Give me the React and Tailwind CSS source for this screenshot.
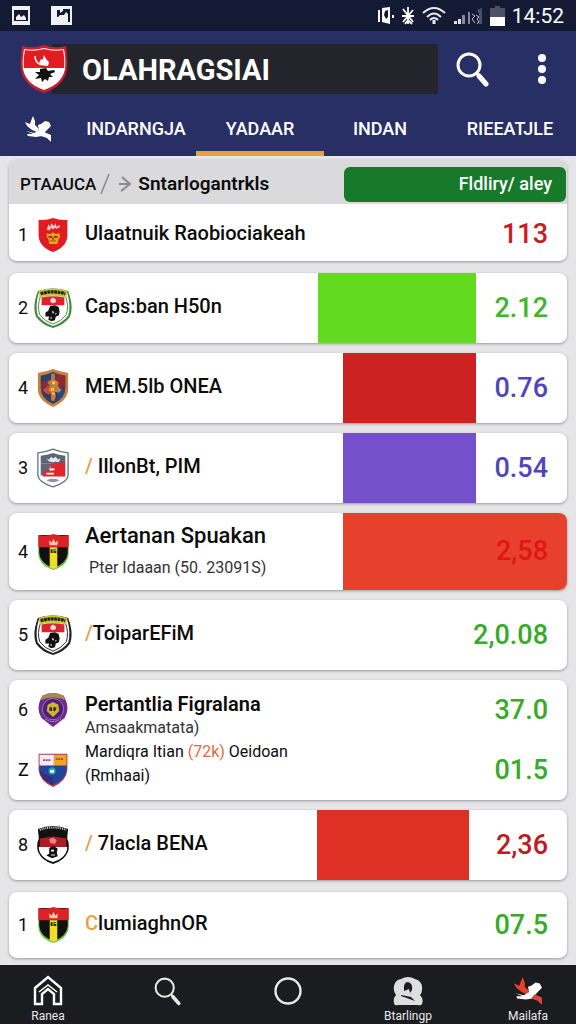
import React from 'react';
import clsx from 'clsx';

const tabs = ['INDARNGJA', 'YADAAR', 'INDAN', 'RIEEATJLE'];

const SHIELD = 'M2 3 Q10 4 18 1 Q26 4 34 3 V20 Q34 33 18 39 Q2 33 2 20 Z';

// Club badges
const RedBadge = () => (
  <svg viewBox="0 0 36 40" className="h-9 w-9">
    <path d={SHIELD} fill="#e01b22" />
    <path d="M11 14 l2 -6 2 3 1 -4 3 3 2 -3 1 4 3 -2 1 2 -4 2 -2 -1 -2 2 -2 -2 -2 3 Z" fill="#f7c9c4" />
    <path d="M11 18 l4 1 3 -2 3 2 4 -1 1 4 -2 3 -1 5 h-9 l-1 -5 -2 -3 Z" fill="#e8a21c" />
    <path d="M13 21 h4 v2 h-4 Z M19 21 h4 v2 h-4 Z M15 26 h6 v1 h-6 Z M17 23 h2 v2 h-2 Z" fill="#8a2a10" />
  </svg>
);

const CrestBadge = ({ ring = '#3f8a3c', cap = '#c8c832' }) => (
  <svg viewBox="0 0 40 44" className="h-[42px] w-[38px]">
    <path d="M4 4 Q20 -1 36 4 Q42 20 38 31 Q32 40 20 43 Q8 40 2 31 Q-2 20 4 4 Z" fill={ring} />
    <path d="M5 6 Q20 1 35 6 Q39 20 36 30 Q30 38 20 41 Q10 38 4 30 Q1 20 5 6 Z" fill="#fff" />
    <path d="M7 9 Q20 5 33 9 Q37 20 34 29 Q29 36 20 39 Q11 36 6 29 Q3 20 7 9 Z" fill="#fff" stroke={ring} strokeWidth="1" />
    <path d="M5 4 Q20 -1 35 4 L34 11 Q20 7 6 11 Z" fill={cap} />
    <path d="M7 7 Q20 3 33 7" fill="none" stroke="#222" strokeWidth="3.4" strokeDasharray="3 0.6" />
    <path d="M8 11 Q20 8 32 11 V19 H8 Z" fill="#dc2430" />
    <path d="M18 12 l2 -1 3 2 0 3 -4 1 -2 -2 Z" fill="#f7dede" />
    <path d="M17 20 L22 19 L26 21 L27 26 L26 30 L23 31 L22 35 L18 36 L15 34 L16 31 L12 31 L12 27 L15 25 Z" fill="#111" />
    <path d="M19 26 l1 -1 1 2 -1 1 Z M22 28 l2 -1 -1 2 Z M17 32 l2 0 0 1 -2 0 Z" fill="#fff" />
  </svg>
);

const BlueBadge = () => (
  <svg viewBox="0 0 36 42" className="h-10 w-[34px]">
    <path d="M2 5 Q11 4 18 1 Q25 4 34 5 V22 Q34 34 18 41 Q2 34 2 22 Z" fill="#c8803a" />
    <path d="M5 8 Q12 7 18 4 Q24 7 31 8 V21 Q31 32 18 38 Q5 32 5 21 Z" fill="#26406f" />
    <path d="M20 6 Q26 8 31 8 V20 H21 Z" fill="#8c2a34" />
    <path d="M5 14 L15 12 V20 L6 24 Z" fill="#7a3044" />
    <path d="M24 22 H31 Q30 29 23 34 Z" fill="#1c4c94" />
    <path d="M7 23 L14 18 L17 22 L14 28 L11 27 Z" fill="#d0482c" />
    <path d="M16 6 h4 v6 l4 3 -1 4 4 4 -3 3 -4 -1 1 5 -2 5 -3 -1 v-7 l-3 -4 2 -4 -3 -4 4 -3 Z" fill="#d67a2c" />
    <path d="M17 7 h2 v5 h-2 Z M15 16 h2 v3 h-2 Z M20 20 h3 v3 h-3 Z" fill="#45a0a0" />
    <path d="M17 14 h3 v3 h-3 Z M16 21 h3 v3 h-3 Z M17 26 h3 v2 h-3 Z" fill="#e8d070" />
  </svg>
);

const GreyBadge = () => (
  <svg viewBox="0 0 36 42" className="h-[42px] w-[34px]">
    <path d="M2 5 Q11 4 18 1 Q25 4 34 5 V29 Q33 36 18 41 Q3 36 2 29 Z" fill="#fff" stroke="#66707f" strokeWidth="1.4" />
    <path d="M5 8 Q12 7 18 5 Q24 7 31 8 V16 H5 Z" fill="#5d6577" />
    <path d="M5 16 H17 L14 22 L10 29 H5 Z" fill="#5d6577" />
    <path d="M11 11 l3 1 2 -3 2 2 3 -2 2 3 3 -1 -2 4 -3 -1 -3 1 -4 -1 Z" fill="#e8eaf0" />
    <path d="M16 16 L31 15 V30 H7 L10 23 L15 22 Z" fill="#e0252c" />
    <path d="M14 22 l5 -1 1 2 -5 1 Z M11 26 h8 v2 h-8 Z" fill="#fff" />
    <path d="M11 34 Q18 31 25 34 Q18 38 11 34 Z" fill="#8e94a6" />
  </svg>
);

const StripeBadge = () => (
  <svg viewBox="0 0 36 40" className="h-[38px] w-[35px]">
    <path d="M2 2 H34 V22 Q33 34 18 39 Q3 34 2 22 Z" fill="#6fbf4b" />
    <path d="M3 2 H33 V21 Q32 32 18 37 Q4 32 3 21 Z" fill="#111" />
    <path d="M2 2 Q10 4 18 1 Q26 4 34 2 V15 H2 Z" fill="#dc2226" />
    <path d="M13 8 l3 2 2 -4 2 4 3 -2 -1 5 h-8 Z" fill="#f5c8a8" />
    <path d="M14 15 H22 V36 L18 38 L14 36 Z" fill="#f0de22" />
    <path d="M15 17 h2 v4 h-2 Z M18 17 h3 v1 h-2 v1 h2 v2 h-3 Z" fill="#222" />
  </svg>
);

const PurpleBadge = () => (
  <svg viewBox="0 0 36 40" className="h-9 w-8">
    <path d="M6 4 Q18 -2 30 4 Q38 18 31 29 L18 39 L5 29 Q-2 18 6 4 Z" fill="#6b2a8c" />
    <path d="M6 4 Q18 -2 30 4 L32 9 Q18 3 4 9 Z" fill="#a58b50" />
    <circle cx="18" cy="19" r="12" fill="#4b2178" stroke="#a878c8" strokeWidth="1" />
    <path d="M12 14 L18 11 L24 14 L25 21 L18 28 L11 21 Z" fill="#d2b32c" />
    <path d="M14 17 h3 v4 h-3 Z M19 16 l3 2 -2 4 -2 -2 Z" fill="#3c2a20" />
    <path d="M9 30 Q18 36 27 30" fill="none" stroke="#d8a8e8" strokeDasharray="2 1" />
  </svg>
);

const SplitBadge = () => (
  <svg viewBox="0 0 36 40" className="h-9 w-9">
    <path d="M2 2 H34 V20 Q33 32 18 39 Q3 32 2 20 Z" fill="#c03a3a" />
    <path d="M3 3 H33 V20 Q32 31 18 37 Q4 31 3 20 Z" fill="#20459c" />
    <path d="M3 3 H19 V15 H3 Z" fill="#f7e9f0" />
    <path d="M19 3 H33 V15 H19 Z" fill="#f2a51f" />
    <path d="M7 9 h9 M21 8 h9" stroke="#8c3a6c" strokeWidth="2" strokeDasharray="2 1" />
    <circle cx="17" cy="21" r="4" fill="#2aa59a" />
    <path d="M15 20 h4 v3 h-4 Z" fill="#fff" />
    <path d="M3 20 Q4 31 18 37 V28 Q8 26 3 20 Z" fill="#3a2a80" />
  </svg>
);

const BlackBadge = () => (
  <svg viewBox="0 0 36 42" className="h-[42px] w-[34px]">
    <path d="M2 4 Q18 -2 34 4 L33 14 Q36 20 34 28 Q30 38 18 41 Q6 38 2 28 Q0 20 3 14 Z" fill="#111" />
    <path d="M3 23 H33 Q33 34 18 39 Q3 34 3 23 Z" fill="#fff" />
    <path d="M4 5 Q18 0 32 5" fill="none" stroke="#ddd" strokeWidth="2" strokeDasharray="1 1" />
    <path d="M4 14 L18 12 L32 14 V23 H4 Z" fill="#b01c26" />
    <path d="M14 15 l4 -2 4 3 -2 4 -5 -1 Z" fill="#ef7f86" />
    <path d="M14 24 L19 22 L23 25 L22 29 L23 33 L17 35 L11 32 L14 30 Z" fill="#111" />
    <path d="M16 26 h3 v2 h-3 Z M16 31 h4 v1 h-4 Z" fill="#fff" />
  </svg>
);

const HeaderLogo = () => (
  <svg viewBox="0 0 48 50" className="z-10 -mr-4 h-[50px] w-12 shrink-0">
    <path d="M2 2 Q13 5 24 1 Q35 5 46 2 Q48 16 47 26 Q44 42 24 49 Q4 42 1 26 Q0 16 2 2 Z" fill="#c8202c" />
    <path d="M4 5 Q14 7 24 4 Q34 7 44 5 Q46 16 45 25 Q42 40 24 46 Q6 40 3 25 Q2 16 4 5 Z" fill="#fff" />
    <path d="M5 6 Q14 8 24 5 Q34 8 43 6 Q45 16 44 24 H4 Q3 16 5 6 Z" fill="#e41c22" />
    <path d="M15 12 q0 5 4 8" fill="none" stroke="#fff" strokeWidth="1.5" />
    <path d="M19 21 L20 16 L23 15 L24 11 L26 15 L29 18 L28 22 Z" fill="#fff" />
    <path d="M20 25 l6 -1 2 3 6 -1 1 2 -5 2 3 3 -4 0 -1 4 -3 -2 -3 3 -1 -4 -6 1 4 -4 -4 -3 5 0 Z" fill="#111" />
  </svg>
);

const BirdIcon = ({ className, wing = '#fff', tail = '#fff' }) => (
  <svg viewBox="0 0 28 28" className={className}>
    <path d="M1 7 L6 9 L7 6 L9 1 L11 6 L11 10 L15 14 L13 17 L8 15 L3 11 Z" fill={wing} />
    <path d="M2 16 L10 18 L15 15 L14 10 L17 9 L21 6 L25 7 L27 11 L24 14 L22 16 L18 21 L12 22 L4 21 L3 19 L9 19 Z" fill="#fff" />
    <path d="M20 17 L27 20 L27 27 L23 23 L17 21 Z" fill={tail} />
  </svg>
);

const SearchIcon = ({ className, strokeWidth = 3 }) => (
  <svg viewBox="0 0 34 36" fill="none" stroke="currentColor" strokeWidth={strokeWidth} strokeLinecap="round" className={className}>
    <circle cx="13" cy="14" r="11" />
    <path d="M21 22 L23 25" />
    <path d="M23 25 L30 33" strokeWidth={strokeWidth + 2} />
  </svg>
);

const StatusBar = () => (
  <div className="flex h-[31px] items-center bg-[#151a34] pl-3 pr-3 text-white">
    <svg viewBox="0 0 18 19" className="h-[19px] w-[18px]">
      <path d="M0 0 H18 V19 H0 Z M2 4 V15 H16 V4 Z" fill="#eef0f4" fillRule="evenodd" />
      <path d="M4 14 V11 L7 8 L9 11 L12 9 L14 12 V14 Z" fill="#eef0f4" />
    </svg>
    <svg viewBox="0 0 21 19" className="ml-[21px] h-[19px] w-[21px]">
      <path d="M0 0 H21 V19 H0 Z" fill="#eef0f4" />
      <path d="M6 4 H9 V7 L12 5 V3 H19 V16 H17 V8 L15 6 L13 9 H9 L7 11 H6 Z" fill="#151a34" />
    </svg>
    <div className="ml-auto flex items-center gap-[7px]">
      <svg viewBox="0 0 16 20" className="h-5 w-4">
        <path d="M0 4 H2 V16 H0 Z M4 2 L12 1 V18 L4 16 Z M14 9 h2 v3 h-2 Z" fill="#fff" />
        <path d="M7 5 L10 4 V11 L8 13 L6 9 Z" fill="#151a34" />
      </svg>
      <svg viewBox="0 0 14 20" className="h-5 w-3.5" fill="none" stroke="#fff" strokeWidth="1.8">
        <path d="M2 3 L12 16 M12 4 L2 16 M7 1 V18 M1 10 H13 M4 18 L7 14 L11 18" />
      </svg>
      <svg viewBox="0 0 24 20" className="h-5 w-6" fill="none" stroke="#e6e8ef" strokeWidth="2">
        <path d="M1 7 Q12 -3 23 7" />
        <path d="M5 11 Q12 4 19 11" />
        <path d="M8 14 Q12 10 16 14" />
        <path d="M12 14 V18" strokeWidth="3" />
      </svg>
      <svg viewBox="0 0 30 20" className="h-5 w-[30px]">
        <path d="M1 15 h3 v3 h-3 Z M5 13 h3 v5 h-3 Z" fill="#dfe2ea" />
        <path d="M9 9 h3 v9 h-3 Z M15 6 h2 v12 h-2 Z" fill="#8388a0" />
        <path d="M24 4 L29 2 V18 H26 V8 Z" fill="#4a4f6a" />
        <path d="M19 8 l3 2 -3 3 3 4 M23 9 l3 2 -2 2 2 3 -2 2" fill="none" stroke="#b9bdcb" />
      </svg>
      <svg viewBox="0 0 15 20" className="h-5 w-[15px]">
        <path d="M0 2 H5 V0 H10 V2 H15 V11 H0 Z" fill="#4d5066" />
        <path d="M0 11 H15 V20 H0 Z" fill="#fff" />
      </svg>
      <span className="text-[21px] leading-6">14:52</span>
    </div>
  </div>
);

const Header = () => (
  <header className="bg-[#272f65] text-white">
    <div className="flex h-[75px] items-center pl-5">
      <HeaderLogo />
      <h1 className="h-[50px] flex-1 bg-[#23242c] pl-[30px] text-[29px] font-bold leading-[52px]">OLAHRAGSIAI</h1>
      <button type="button" aria-label="Search" className="ml-[18px]">
        <SearchIcon className="h-9 w-[34px]" />
      </button>
      <button type="button" aria-label="More" className="ml-[34px] mr-4 flex w-9 justify-center">
        <svg viewBox="0 0 8 30" className="h-[30px] w-2" fill="#fff">
          <circle cx="4" cy="4" r="4" />
          <circle cx="4" cy="15" r="4" />
          <circle cx="4" cy="26" r="4" />
        </svg>
      </button>
    </div>
    <nav className="grid h-[50px] grid-cols-[76fr_120fr_128fr_112fr_140fr] text-lg font-medium">
      <button type="button" aria-label="Home" className="flex items-center justify-center pb-1">
        <BirdIcon className="h-7 w-7" />
      </button>
      {tabs.map((tab, i) => (
        <a
          key={tab}
          href="#"
          className={clsx(
            'flex items-center justify-center border-b-[5px]',
            i === 1 ? 'border-[#e9a13b]' : 'border-transparent',
            i === 3 && 'pl-2'
          )}
        >
          {tab}
        </a>
      ))}
    </nav>
  </header>
);

const Card = ({ children }) => (
  <div className="overflow-hidden rounded-lg bg-white shadow-[0_1px_3px_rgba(0,0,0,0.35)]">{children}</div>
);

const Row = ({ rank, badge, height = 'min-h-[70px]', bar, value, valueStyle = 'w-[91px]', children }) => (
  <div className={clsx('flex', height)}>
    <div className="flex w-[76px] shrink-0 items-center pl-[9px]">
      <span className="w-[15px] text-lg">{rank}</span>
      <span className="flex w-10 justify-center">{badge}</span>
    </div>
    <div className="flex min-w-0 flex-1 flex-col justify-center whitespace-nowrap">{children}</div>
    {bar && <div className={clsx('shrink-0', bar)} />}
    <div className={clsx('flex shrink-0 items-center justify-end pr-[19px] text-[27px] font-medium', valueStyle)}>
      {value}
    </div>
  </div>
);

const Name = ({ mark, children }) => (
  <p className="pb-1 text-xl font-medium leading-6">
    {mark && <span className="text-[#e8a03c]">{mark}</span>}
    {children}
  </p>
);

const NavItem = ({ label, title, children }) => (
  <a href="#" aria-label={title} className="flex w-[60px] flex-col items-center justify-start pt-2 text-xs leading-4">
    <span className="flex h-[35px] items-center">{children}</span>
    {label}
  </a>
);

const BottomNav = () => (
  <nav className="flex h-[59px] justify-between bg-[#1b1c1f] px-[18px] text-[#e8e8e8]">
    <NavItem label="Ranea">
      <svg viewBox="0 0 30 31" className="h-[31px] w-[30px]" fill="none" stroke="#fff" strokeWidth="2.4">
        <path d="M2 13 L15 2 L28 13 V29 H21 V19 L15 14 L9 19 V29 H2 Z" />
        <path d="M6 17 L15 10 L24 17" strokeWidth="1.5" />
      </svg>
    </NavItem>
    <NavItem title="Search">
      <SearchIcon className="h-[30px] w-7" strokeWidth={2.5} />
    </NavItem>
    <NavItem title="Record">
      <svg viewBox="0 0 28 28" className="h-7 w-7" fill="none" stroke="currentColor" strokeWidth="2.4">
        <circle cx="14" cy="14" r="12.5" />
      </svg>
    </NavItem>
    <NavItem label="Btarlingp">
      <svg viewBox="0 0 30 30" className="h-[30px] w-[30px]">
        <path d="M8 3 Q15 -1 22 3 Q30 5 29 14 Q29 17 27 19 Q31 23 29 28 Q28 30 25 29 H5 Q1 30 1 27 Q0 22 3 19 Q0 15 1 10 Q2 4 8 3 Z" fill="#dedede" />
        <path d="M11 15 Q10 6 15 6 Q20 7 19 14 L17 17 L16 13 Z" fill="#1b1c1f" />
        <path d="M8 19 Q14 20 18 21 L22 25 Q14 22 8 20 Z" fill="#1b1c1f" />
      </svg>
    </NavItem>
    <NavItem label="Mailafa">
      <BirdIcon className="h-[30px] w-8" wing="#e8402c" tail="#d8463c" />
    </NavItem>
  </nav>
);

const App = () => {
  return (
    <div className="flex min-h-screen flex-col bg-[#e6e6e8] font-[Roboto,sans-serif] text-[#0c0c0c]">
      <StatusBar />
      <Header />

      <main className="flex flex-1 flex-col gap-3 px-[9px] pb-[7px] pt-1">
        <Card>
          <div className="flex h-11 items-center bg-[#dadadc] pl-[11px] pt-1 text-lg">
            <h2 className="text-[17px] font-medium">PTAAUCA</h2>
            <svg viewBox="0 0 34 22" className="ml-1 mr-1 h-[22px] w-[34px]" fill="none" stroke="#8b8b8f" strokeWidth="2">
              <path d="M1 21 L9 1" strokeWidth="1.5" />
              <path d="M19 11 H30 M22 4 L30 11 L21 18" />
            </svg>
            <h3 className="text-[19px] font-semibold">Sntarlogantrkls</h3>
            <button
              type="button"
              className="ml-auto mr-px h-[35px] w-[222px] rounded-md bg-[#167a2a] pr-3.5 text-right font-medium text-white"
            >
              Fldliry/ aley
            </button>
          </div>
          <Row rank="1" badge={<RedBadge />} height="min-h-[57px] pt-1" value="113" valueStyle="w-[91px] text-[#cc1a1e]">
            <Name>Ulaatnuik Raobiociakeah</Name>
          </Row>
        </Card>

        <div className="flex flex-col gap-2.5">
          <Card>
            <Row rank="2" badge={<CrestBadge />} bar="w-[158px] bg-[#61da20]" value="2.12" valueStyle="w-[91px] text-[#40b52c]">
              <Name>Caps:ban H50n</Name>
            </Row>
          </Card>
          <Card>
            <Row rank="4" badge={<BlueBadge />} bar="w-[133px] bg-[#cc2222]" value="0.76" valueStyle="w-[91px] text-[#5044c0]">
              <Name>MEM.5lb ONEA</Name>
            </Row>
          </Card>
          <Card>
            <Row rank="3" badge={<GreyBadge />} bar="w-[133px] bg-[#7450cc]" value="0.54" valueStyle="w-[91px] text-[#5044c0]">
              <Name mark="/ ">IllonBt, PIM</Name>
            </Row>
          </Card>
          <Card>
            <Row
              rank="4"
              badge={<StripeBadge />}
              height="min-h-[77px]"
              value="2,58"
              valueStyle="w-[224px] bg-[#e7412e] text-[#e01518]"
            >
              <p className="text-[22px] font-medium leading-7">Aertanan Spuakan</p>
              <p className="mt-1 pl-1 text-base leading-7 text-[#333]">Pter Idaaan (50. 23091S)</p>
            </Row>
          </Card>
          <Card>
            <Row rank="5" badge={<CrestBadge ring="#222" />} value="2,0.08" valueStyle="w-[120px] text-[#37ab28]">
              <Name mark="/">ToiparEFiM</Name>
            </Row>
          </Card>
          <Card>
            <Row rank="6" badge={<PurpleBadge />} height="min-h-[60px]" value="37.0" valueStyle="w-[91px] text-[#37ab28]">
              <p className="pt-3 text-xl font-semibold leading-6">Pertantlia Figralana</p>
              <p className="text-base leading-6 text-[#333]">Amsaakmatata)</p>
            </Row>
            <Row rank="Z" badge={<SplitBadge />} height="min-h-[60px]" value="01.5" valueStyle="w-[91px] text-[#37ab28]">
              <p className="text-base leading-6">
                Mardiqra Itian <span className="text-[#e2683c]">(72k)</span> Oeidoan
              </p>
              <p className="pb-3 text-base leading-6">(Rmhaai)</p>
            </Row>
          </Card>
          <Card>
            <Row rank="8" badge={<BlackBadge />} bar="w-[152px] bg-[#df3026]" value="2,36" valueStyle="w-[98px] text-[#c01a20]">
              <Name mark="/ ">7lacla BENA</Name>
            </Row>
          </Card>
        </div>

        <Card>
          <Row rank="1" badge={<StripeBadge />} height="min-h-[66px]" value="07.5" valueStyle="w-[91px] text-[#37ab28]">
            <Name mark="C">lumiaghnOR</Name>
          </Row>
        </Card>
      </main>

      <BottomNav />
    </div>
  );
};

export default App;
